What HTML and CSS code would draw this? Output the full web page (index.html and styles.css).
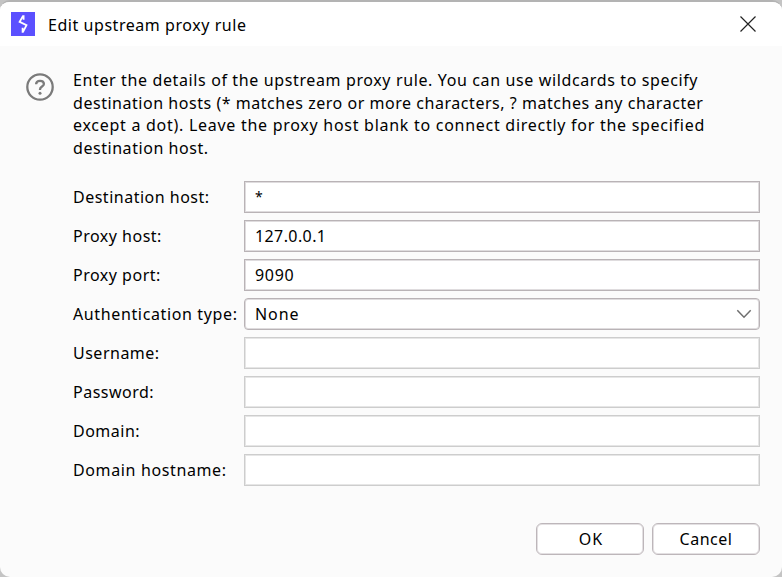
FILE: index.html
```
<!DOCTYPE html>
<html lang="en">
<head>
<meta charset="utf-8">
<title>Edit upstream proxy rule</title>
<link rel="stylesheet" href="styles.css">
</head>
<body>
<main class="dialog">
  <header class="titlebar">
    <svg class="logo" width="24" height="24" viewBox="0 0 24 24"><rect width="24" height="24" fill="#5b50ff"/><path d="M12.6 3.3V7.8M12.2 3.6L8.6 9.9L15.5 13.1L11.9 20.2M11.6 15.8V20.7" fill="none" stroke="#fff" stroke-width="1.8"/></svg>
    <h1 class="title">Edit upstream proxy rule</h1>
    <svg class="close" width="16" height="16" viewBox="0 0 16 16"><path d="M.5 .5L15.5 15.5M15.5 .5L.5 15.5" stroke="#222" stroke-width="1.2"/></svg>
  </header>
  <section class="intro">
    <svg class="help" width="28" height="28" viewBox="0 0 28 28" fill="none" stroke="#7b7b7b" stroke-width="2.3"><circle cx="14" cy="14" r="12.7"/><path d="M10.1 11.2C10.2 8.6 11.8 7.8 14 7.8C16.3 7.8 17.9 9 17.9 10.9C17.9 13.6 14 13.4 14 16.4V17"/><circle cx="14" cy="20.2" r="1.5" fill="#7b7b7b" stroke="none"/></svg>
    <p class="text">
      <span class="line line1">Enter the details of the upstream proxy rule. You can use wildcards to specify</span>
      <span class="line line2">destination hosts (* matches zero or more characters, ? matches any character</span>
      <span class="line line3">except a dot). Leave the proxy host blank to connect directly for the specified</span>
      <span class="line line4">destination host.</span>
    </p>
  </section>
  <form class="form">
    <span class="label">Destination host:</span><div class="field"><span class="star">*</span></div>
    <span class="label">Proxy host:</span><div class="field">127.0.0.1</div>
    <span class="label">Proxy port:</span><div class="field port">9090</div>
    <span class="label wide">Authentication type:</span><div class="field select">None<svg width="16" height="10" viewBox="0 0 16 10"><path d="M1.3 1.3L8 8.2L14.7 1.3" fill="none" stroke="#6e6e6e" stroke-width="1.5"/></svg></div>
    <span class="label">Username:</span><div class="field disabled"></div>
    <span class="label">Password:</span><div class="field disabled"></div>
    <span class="label">Domain:</span><div class="field disabled"></div>
    <span class="label wide">Domain hostname:</span><div class="field disabled"></div>
  </form>
  <footer class="actions">
    <button class="button ok" type="button">OK</button>
    <button class="button" type="button">Cancel</button>
  </footer>
</main>
</body>
</html>
```
FILE: styles.css
```
* { box-sizing: border-box; }
body { margin: 0; background: #c4c4c4; overflow: hidden; }
.dialog {
  width: 782px; height: 577px;
  display: flex; flex-direction: column;
  background: #fbfbfb;
  border-top: 2px solid #b3b3b3;
  border-radius: 10px;
  overflow: hidden;
  font: 16px/22.67px "Noto Sans", sans-serif;
  letter-spacing: .4px;
  color: #000;
}
.titlebar { height: 44px; flex: none; display: flex; align-items: center; padding: 0 26px 0 11px; background: #fff; }
.title { margin: 2px 0 0 13px; font-size: 16px; font-weight: 400; letter-spacing: .55px; flex: 1; }
.close { display: block; }
.intro { display: flex; height: 135px; padding: 23px 0 0 26px; }
.help { margin-top: 4px; flex: none; }
.text { margin: 0 0 0 19px; }
.line { display: block; white-space: nowrap; }
.line1 { letter-spacing: .625px; }
.line2 { letter-spacing: .535px; }
.line3 { letter-spacing: .725px; }
.line4 { letter-spacing: .55px; }
.form { display: grid; grid-template-columns: 171px 516px; grid-auto-rows: 32px; row-gap: 7px; margin: 0 0 0 73px; align-items: center; }
.label { white-space: nowrap; letter-spacing: .5px; }
.wide { letter-spacing: .63px; }
.field { height: 32px; display: flex; align-items: center; justify-content: space-between; padding: 0 7px 0 10px; background: #fff; border: 1px solid #b9b3b6; box-shadow: inset 0 0 0 1px #dfdcde; }
.star { font-size: 14px; }
.port { letter-spacing: .7px; }
.select { border-radius: 4px; letter-spacing: .9px; }
.disabled { border-color: #cdcdcd; box-shadow: inset 0 0 0 1px #e6e6e6; }
.actions { display: flex; justify-content: flex-end; gap: 8px; padding: 37px 22px 0 0; }
.button { width: 108px; height: 32px; padding: 0; background: #fff; border: 1px solid #bdb6ba; border-radius: 6px; box-shadow: inset 0 0 0 1px #e3e0e2; font: inherit; letter-spacing: .5px; color: #000; }
.ok { padding-left: 2px; letter-spacing: 1px; }
```
